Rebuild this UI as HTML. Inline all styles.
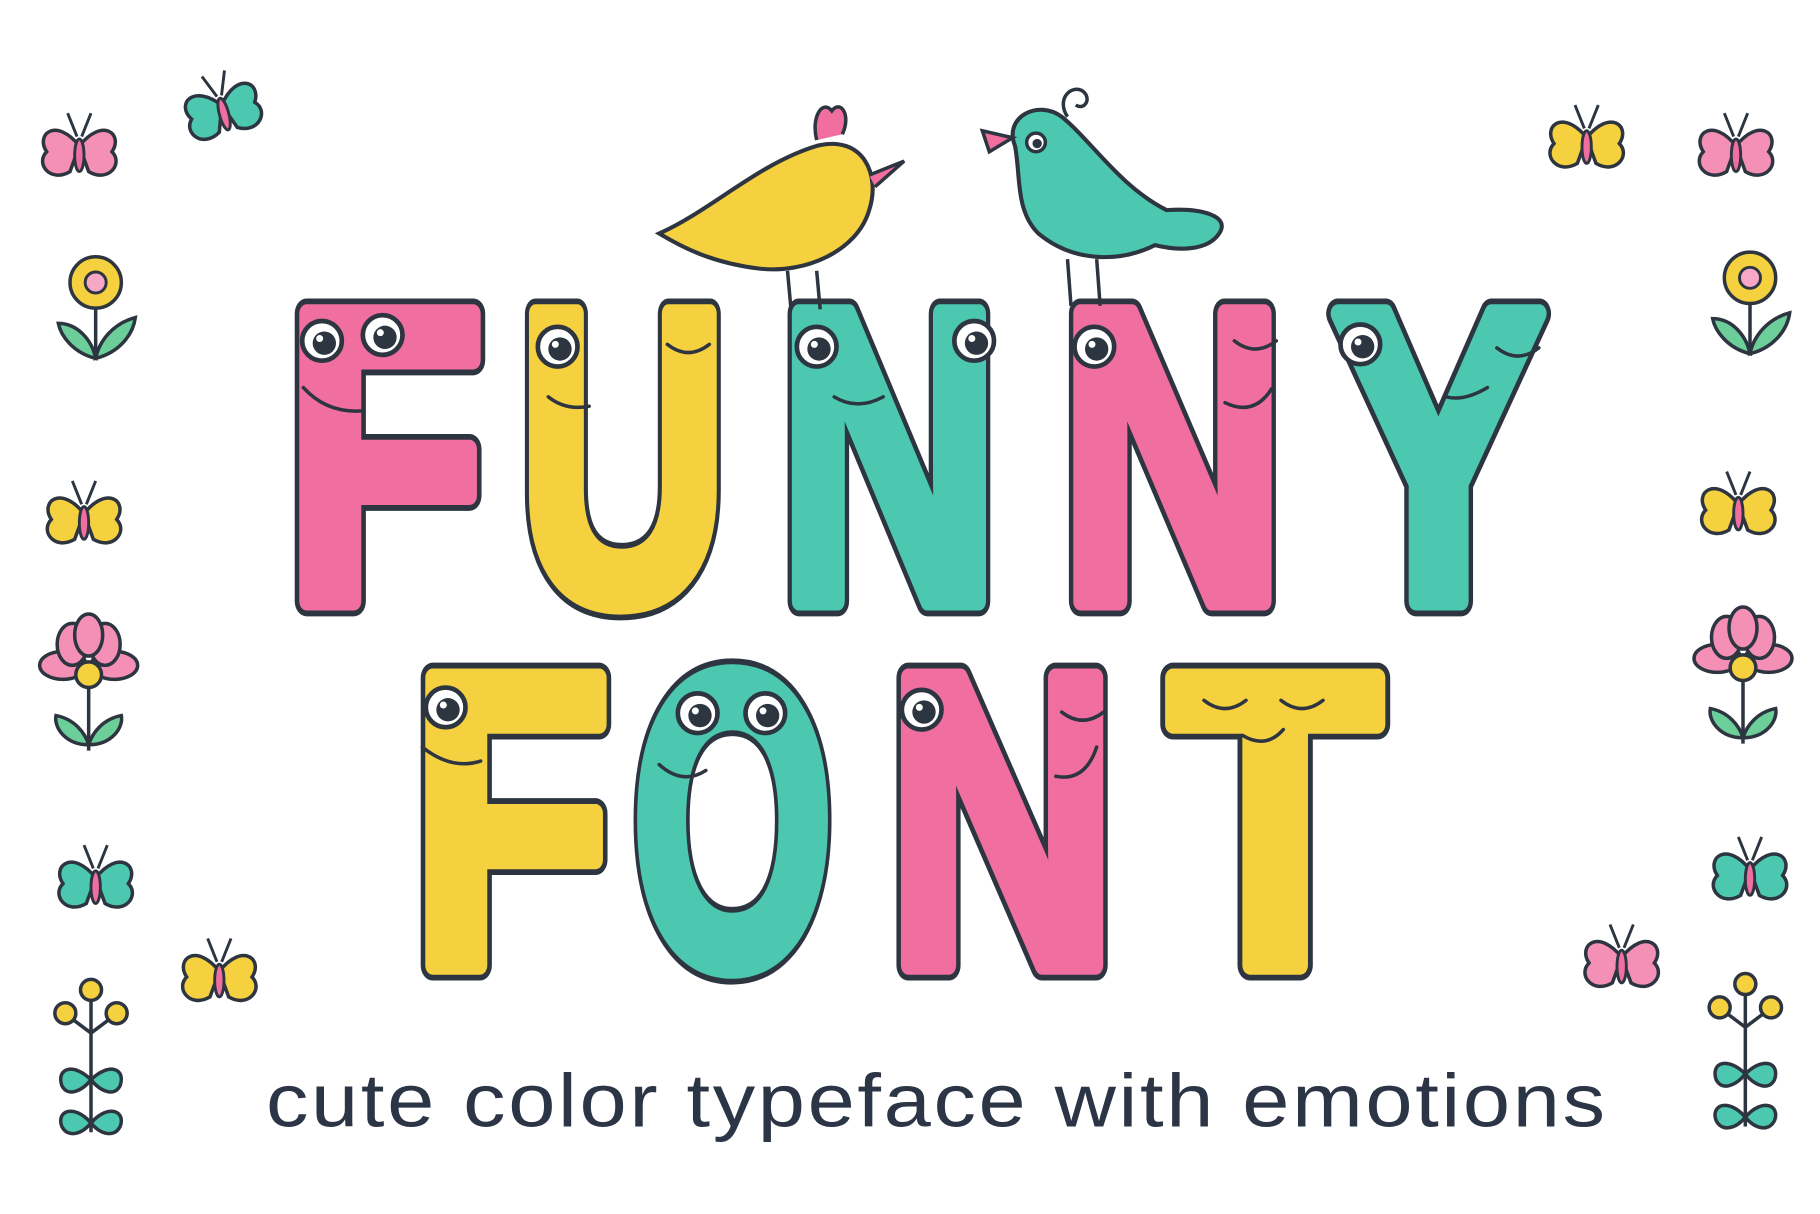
<!DOCTYPE html>
<html><head><meta charset="utf-8"><style>
html,body{margin:0;padding:0;background:#fff;width:1820px;height:1214px;overflow:hidden}
svg{display:block}
.L{font-family:"Liberation Sans",sans-serif;font-weight:bold;font-size:358px;stroke-linejoin:round}
.o{fill:#2d3540;stroke:#2d3540;stroke-width:26}
.pk{fill:#f06fa0;stroke:#f06fa0;stroke-width:16}
.yl{fill:#f5d03f;stroke:#f5d03f;stroke-width:16}
.tl{fill:#4cc8b0;stroke:#4cc8b0;stroke-width:16}
.sub{font-family:"Liberation Sans",sans-serif;font-size:64px;fill:#2b3545;letter-spacing:2px}
</style></head><body>
<svg width="1820" height="1214" viewBox="0 0 1560 1040" preserveAspectRatio="none">
<defs>
<g id="eye"><circle r="17" fill="#fff" stroke="#2d3540" stroke-width="4"/><circle cx="2" cy="2" r="10" fill="#2d3540"/><circle cx="-2" cy="-2" r="3" fill="#fff"/></g>
<g id="bf"><path d="M0 0 C-20 -25 -38 -10 -28 5 C-38 15 -25 32 -8 22 Z" stroke="#2d3540" stroke-width="3"/><path d="M0 0 C20 -25 38 -10 28 5 C38 15 25 32 8 22 Z" stroke="#2d3540" stroke-width="3"/><path d="M-2 -8 L-10 -28 M2 -8 L10 -28" stroke="#2d3540" stroke-width="2.5" fill="none"/><ellipse cx="0" cy="8" rx="4" ry="14" fill="#f06fa0" stroke="#2d3540" stroke-width="2.5"/></g>
<g id="fl"><path d="M0 0 L0 65" stroke="#2d3540" stroke-width="3"/><path d="M0 65 C-20 60 -30 45 -32 35 C-15 35 -3 50 0 65 Z" fill="#6ccf99" stroke="#2d3540" stroke-width="3"/><path d="M0 65 C20 60 32 45 34 30 C15 35 3 50 0 65 Z" fill="#6ccf99" stroke="#2d3540" stroke-width="3"/><circle r="22" fill="#f5d03f" stroke="#2d3540" stroke-width="3"/><circle r="9" fill="#f7a8c6" stroke="#2d3540" stroke-width="2.5"/></g>
<g id="fl2"><path d="M0 0 L0 65" stroke="#2d3540" stroke-width="3"/><path d="M0 60 C-20 60 -30 45 -28 35 C-12 38 -3 50 0 60 Z M0 60 C20 60 30 45 28 35 C12 38 3 50 0 60Z" fill="#6ccf99" stroke="#2d3540" stroke-width="3"/><g fill="#f48fb5" stroke="#2d3540" stroke-width="3"><ellipse cx="-22" cy="-8" rx="20" ry="12"/><ellipse cx="22" cy="-8" rx="20" ry="12"/><ellipse cx="-14" cy="-26" rx="13" ry="18"/><ellipse cx="14" cy="-26" rx="13" ry="18"/><ellipse cx="0" cy="-34" rx="12" ry="18"/></g><circle r="11" fill="#f5d03f" stroke="#2d3540" stroke-width="3"/></g>
<g id="fl3"><path d="M0 -60 L0 60 M0 -25 L-20 -40 M0 -25 L20 -40" stroke="#2d3540" stroke-width="3" fill="none"/><g fill="#f5d03f" stroke="#2d3540" stroke-width="3"><circle cy="-62" r="9"/><circle cx="-22" cy="-42" r="9"/><circle cx="22" cy="-42" r="9"/></g><g fill="#4cc8b0" stroke="#2d3540" stroke-width="3"><path d="M0 15 C-15 0 -30 5 -25 20 C-20 30 -8 25 0 15Z M0 15 C15 0 30 5 25 20 C20 30 8 25 0 15Z M0 52 C-15 35 -30 42 -25 55 C-20 65 -8 62 0 52Z M0 52 C15 35 30 42 25 55 C20 65 8 62 0 52Z"/></g></g>
</defs>
<g class="L">
<text class="o" x="244" y="515" textLength="172" lengthAdjust="spacingAndGlyphs">F</text>
<text class="o" x="444" y="515" textLength="180" lengthAdjust="spacingAndGlyphs">U</text>
<text class="o" x="667" y="515" textLength="190" lengthAdjust="spacingAndGlyphs">N</text>
<text class="o" x="908" y="515" textLength="194" lengthAdjust="spacingAndGlyphs">N</text>
<text class="o" x="1142" y="515" textLength="182" lengthAdjust="spacingAndGlyphs">Y</text>
<text class="o" x="352" y="827" textLength="172" lengthAdjust="spacingAndGlyphs">F</text>
<text class="o" x="542" y="827" textLength="172" lengthAdjust="spacingAndGlyphs">O</text>
<text class="o" x="760" y="827" textLength="198" lengthAdjust="spacingAndGlyphs">N</text>
<text class="o" x="1002" y="827" textLength="182" lengthAdjust="spacingAndGlyphs">T</text>

<text class="pk" x="244" y="515" textLength="172" lengthAdjust="spacingAndGlyphs">F</text>
<text class="yl" x="444" y="515" textLength="180" lengthAdjust="spacingAndGlyphs">U</text>
<text class="tl" x="667" y="515" textLength="190" lengthAdjust="spacingAndGlyphs">N</text>
<text class="pk" x="908" y="515" textLength="194" lengthAdjust="spacingAndGlyphs">N</text>
<text class="tl" x="1142" y="515" textLength="182" lengthAdjust="spacingAndGlyphs">Y</text>
<text class="yl" x="352" y="827" textLength="172" lengthAdjust="spacingAndGlyphs">F</text>
<text class="tl" x="542" y="827" textLength="172" lengthAdjust="spacingAndGlyphs">O</text>
<text class="pk" x="760" y="827" textLength="198" lengthAdjust="spacingAndGlyphs">N</text>
<text class="yl" x="1002" y="827" textLength="182" lengthAdjust="spacingAndGlyphs">T</text>
</g>
<!-- eyes -->
<use href="#eye" x="276" y="292"/><use href="#eye" x="328" y="287"/>
<use href="#eye" x="478" y="297"/><use href="#eye" x="700" y="297"/><use href="#eye" x="835" y="292"/>
<use href="#eye" x="938" y="297"/><use href="#eye" x="1166" y="295"/>
<use href="#eye" x="382" y="606"/><use href="#eye" x="598" y="611"/><use href="#eye" x="656" y="611"/><use href="#eye" x="790" y="608"/>
<g stroke="#2d3540" stroke-width="3" fill="none" stroke-linecap="round">
<path d="M260 332 q20 22 50 20"/><path d="M470 340 q15 12 35 8"/><path d="M715 340 q20 12 42 0"/><path d="M1050 345 q25 12 40 -12"/><path d="M1240 340 q15 4 35 -8"/>
<path d="M362 640 q25 20 50 12"/><path d="M565 655 q20 18 40 5"/><path d="M905 665 q25 5 35 -25"/><path d="M1065 630 q20 12 35 -5"/>
<path d="M572 295 q18 14 36 0"/><path d="M1058 292 q18 14 36 0"/><path d="M1283 298 q18 14 36 0"/><path d="M910 610 q18 14 36 0"/><path d="M1032 600 q18 14 36 0"/><path d="M1098 600 q18 14 36 0"/>
</g>
<!-- birds -->
<path d="M565 200 C610 180 650 140 700 125 C740 115 755 150 745 180 C735 215 690 235 650 230 C610 225 585 212 565 200Z" fill="#f5d03f" stroke="#2d3540" stroke-width="3.5"/>
<path d="M700 120 C695 100 705 85 713 95 C720 85 730 98 722 115" fill="#f06fa0" stroke="#2d3540" stroke-width="3"/>
<path d="M745 150 L775 138 L750 160" fill="#f06fa0" stroke="#2d3540" stroke-width="3"/>
<path d="M675 232 L678 265 M700 232 L703 265" stroke="#2d3540" stroke-width="3"/>
<path d="M870 125 C860 100 890 85 910 100 C935 120 960 160 1000 180 C1030 178 1055 185 1045 200 C1035 215 1010 215 990 210 C960 225 920 225 890 200 C870 180 875 150 870 125Z" fill="#4cc8b0" stroke="#2d3540" stroke-width="3.5"/>
<path d="M868 118 L842 112 L848 130 Z" fill="#f06fa0" stroke="#2d3540" stroke-width="3"/>
<path d="M915 100 C905 85 918 72 928 78 C936 84 930 95 922 90" fill="none" stroke="#2d3540" stroke-width="3"/>
<circle cx="888" cy="122" r="8" fill="#fff" stroke="#2d3540" stroke-width="3"/><circle cx="889" cy="123" r="4" fill="#2d3540"/>
<path d="M915 222 L918 262 M940 222 L943 262" stroke="#2d3540" stroke-width="3"/>
<!-- butterflies -->
<use href="#bf" x="68" y="125" fill="#f48fb5"/><use href="#bf" x="190" y="90" fill="#4cc8b0" transform="rotate(-15 190 90)"/>
<use href="#bf" x="72" y="440" fill="#f5d03f"/><use href="#bf" x="82" y="752" fill="#4cc8b0"/><use href="#bf" x="188" y="832" fill="#f5d03f"/>
<use href="#bf" x="1360" y="118" fill="#f5d03f"/><use href="#bf" x="1488" y="125" fill="#f48fb5"/>
<use href="#bf" x="1490" y="432" fill="#f5d03f"/><use href="#bf" x="1500" y="745" fill="#4cc8b0"/><use href="#bf" x="1390" y="820" fill="#f48fb5"/>
<!-- flowers -->
<use href="#fl" x="82" y="242"/><use href="#fl" x="1500" y="238"/>
<use href="#fl2" x="76" y="578"/><use href="#fl2" x="1494" y="572"/>
<use href="#fl3" x="78" y="910"/><use href="#fl3" x="1496" y="905"/>
<text class="sub" x="228" y="965" textLength="1150" lengthAdjust="spacingAndGlyphs">cute color typeface with emotions</text>
</svg>
</body></html>
